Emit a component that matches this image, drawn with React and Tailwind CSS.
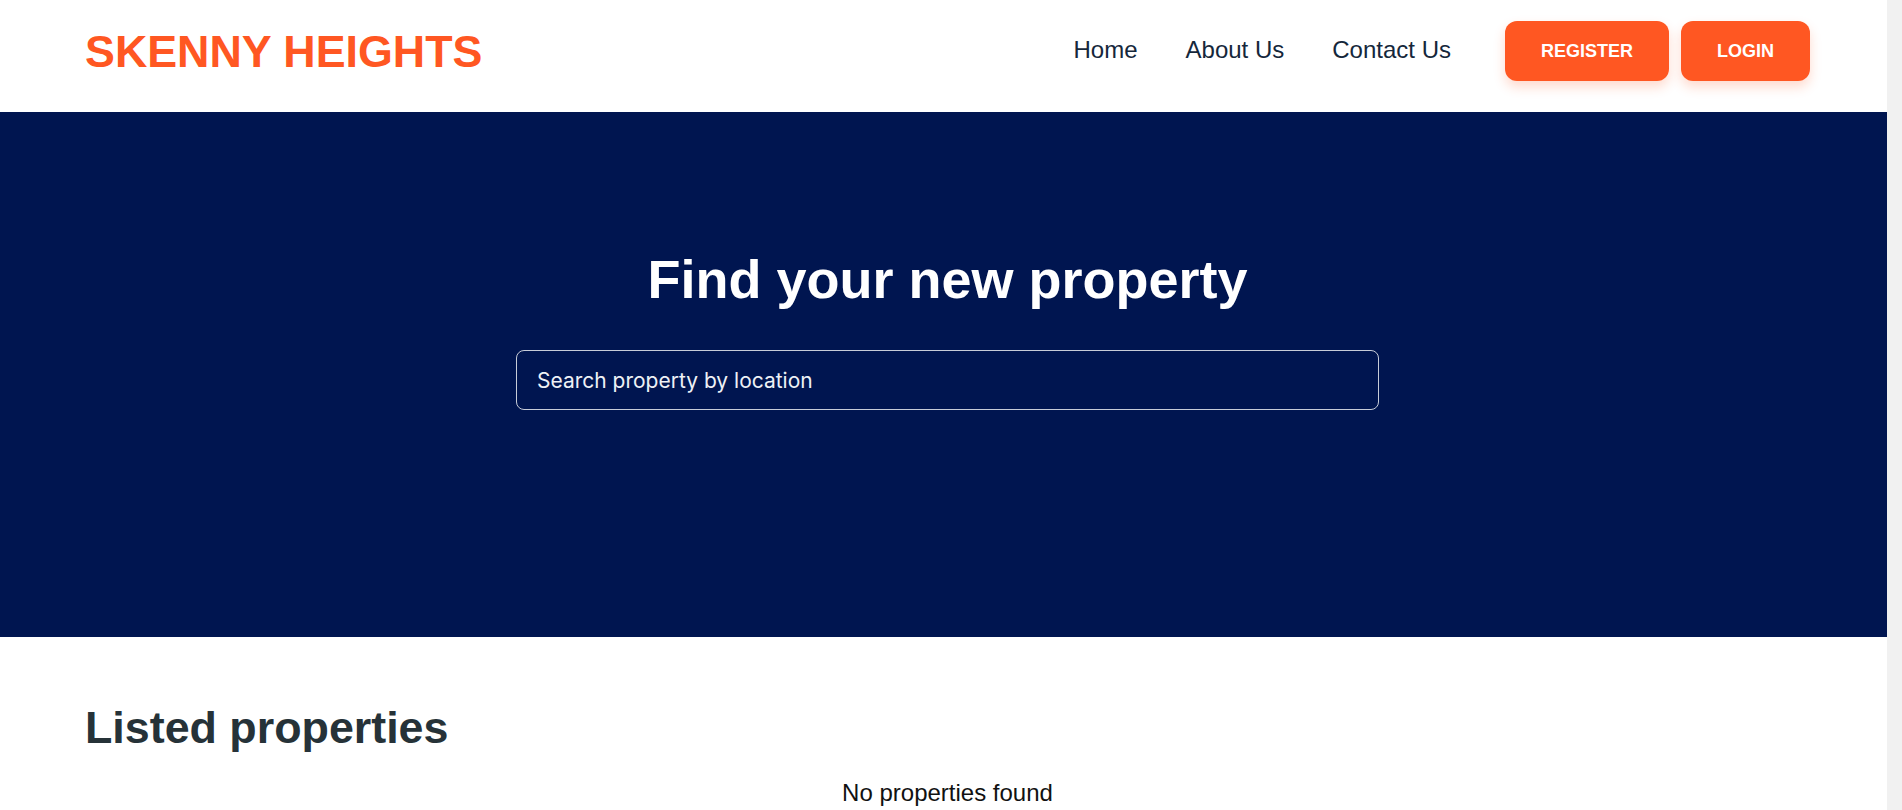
import React, { useState } from 'react';

const navLinks = ['Home', 'About Us', 'Contact Us'];

const Header = () => (
  <header className="h-[112px] pb-[10px] pl-[85px] pr-[77px] flex items-center justify-between bg-white">
    <a href="#" className="text-[44.8px] leading-none font-bold text-[#ff5722] tracking-normal">
      SKENNY HEIGHTS
    </a>
    <nav className="flex items-center">
      <ul className="flex items-center gap-12">
        {navLinks.map((link) => (
          <li key={link}>
            <a href="#" className="text-[24px] leading-none text-[#15273b]">
              {link}
            </a>
          </li>
        ))}
      </ul>
      <div className="ml-[54px] flex items-center gap-3">
        <button className="h-[60px] px-9 rounded-xl bg-[#ff5722] text-white text-[18px] leading-none font-bold shadow-[0_6px_12px_rgba(255,87,34,0.22)]">
          REGISTER
        </button>
        <button className="h-[60px] px-9 rounded-xl bg-[#ff5722] text-white text-[18px] leading-none font-bold shadow-[0_6px_12px_rgba(255,87,34,0.22)]">
          LOGIN
        </button>
      </div>
    </nav>
  </header>
);

const Hero = ({ query, setQuery }) => (
  <section className="h-[525px] bg-[#001550] pt-[140px] pl-[85px] pr-[77px] flex flex-col items-center">
    <h1 className="text-[54px] leading-none font-bold text-white">Find your new property</h1>
    <input
      type="text"
      value={query}
      onChange={(e) => setQuery(e.target.value)}
      placeholder="Search property by location"
      className="mt-[44px] w-[863px] h-[60px] rounded-lg border border-[#c7ccd8] bg-transparent pl-5 pr-5 text-[21px] text-white placeholder:text-[#eef1f6] outline-none [font-family:Inter,'Noto_Sans',sans-serif]"
    />
  </section>
);

const App = () => {
  const [query, setQuery] = useState('');
  const properties = [];

  return (
    <div className="min-h-[1750px] pr-[15px] bg-[#f1f1f1] [font-family:'Liberation_Sans',Arial,sans-serif]">
      <div className="min-h-[1750px] bg-white">
        <Header />
        <Hero query={query} setQuery={setQuery} />

        {/* Listings */}
        <section className="pl-[85px] pr-[77px] pt-[68px]">
          <h2 className="text-[44.8px] leading-none font-bold text-[#263238]">Listed properties</h2>
          {properties.length === 0 ? (
            <p className="mt-[31px] text-center text-[24px] leading-none text-[#111]">No properties found</p>
          ) : null}
        </section>
      </div>
    </div>
  );
};

export default App;
